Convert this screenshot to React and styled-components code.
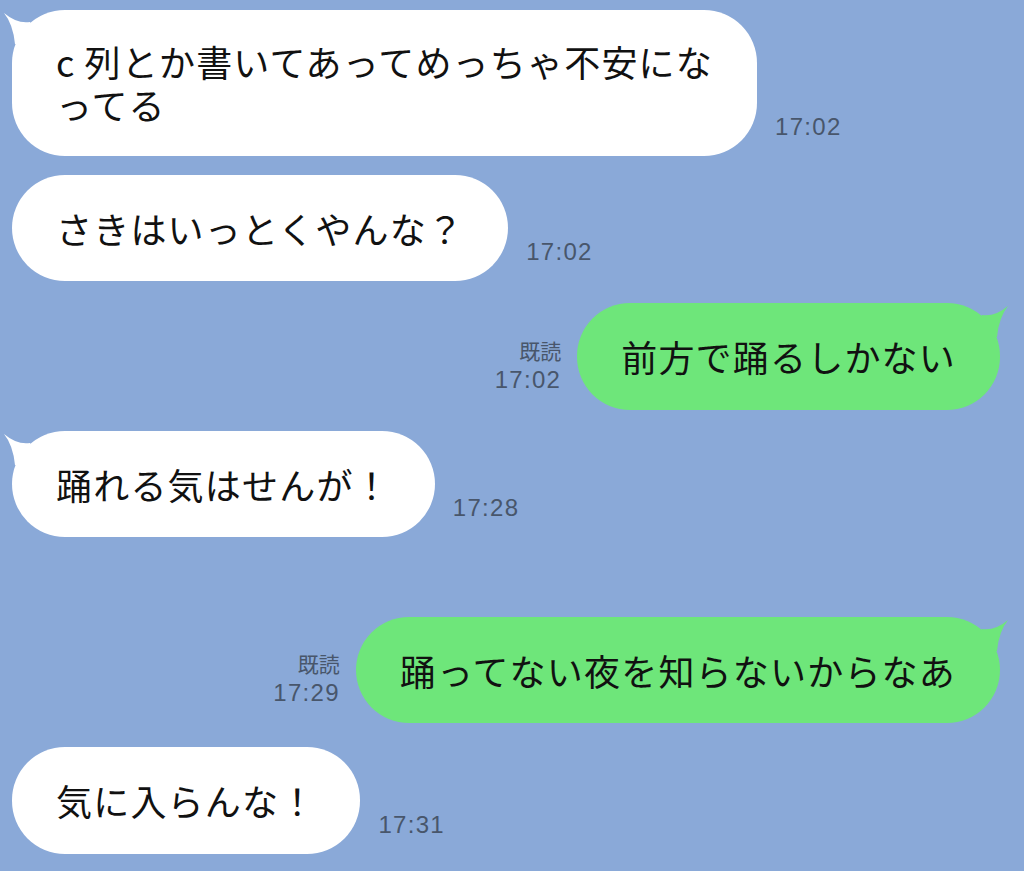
import React from "react";
import styled, { createGlobalStyle } from "styled-components";

const Global = createGlobalStyle`
  html, body { margin: 0; padding: 0; background: #8aa9d8; }
  body { font-family: "Noto Sans CJK JP", "Noto Sans", sans-serif; }
`;

const Screen = styled.div`
  width: 1024px;
  height: 871px;
  background: #8aa9d8;
  box-sizing: border-box;
  padding: 10px 24px 0 12px;
  overflow: hidden;
  display: flex;
  flex-direction: column;
`;

const Row = styled.div`
  display: flex;
  align-items: flex-end;
  justify-content: ${(p) => (p.$mine ? "flex-end" : "flex-start")};
  margin-top: ${(p) => p.$gap || 0}px;
`;

const Bubble = styled.div`
  position: relative;
  box-sizing: border-box;
  height: ${(p) => p.$h}px;
  padding: 0 44px;
  border-radius: 53px;
  background: ${(p) => (p.$mine ? "#6ee67a" : "#ffffff")};
  color: #111;
  font-family: "Noto Sans CJK JP", sans-serif;
  font-size: 36px;
  letter-spacing: 1.2px;
  white-space: nowrap;
  display: flex;
  flex-direction: column;
  justify-content: center;
`;

const Line = styled.span`
  display: block;
  line-height: 43px;
`;

const Latin = styled.span`
  margin-right: 9px;
`;

const Tail = styled.svg`
  position: absolute;
  top: 0;
  ${(p) => (p.$mine ? "right: -10px; transform: scaleX(-1);" : "left: -10px;")}
  width: 50px;
  height: 40px;
  overflow: visible;
`;

const Meta = styled.div`
  display: flex;
  flex-direction: column;
  align-items: ${(p) => (p.$mine ? "flex-end" : "flex-start")};
  margin: 0 ${(p) => (p.$mine ? "16px" : "0")} ${(p) => p.$mb || 18}px ${(p) => (p.$mine ? "0" : "18px")};
  color: #48566b;
`;

const Read = styled.span`
  font-family: "Noto Sans CJK JP", sans-serif;
  font-size: 21px;
  line-height: 22px;
  margin-bottom: 8px;
`;

const Time = styled.span`
  font-family: "Liberation Sans", "Inter", sans-serif;
  font-size: 24px;
  line-height: 22px;
  letter-spacing: 1.3px;
`;

function BubbleTail({ mine }) {
  return (
    <Tail $mine={mine} viewBox="-10 0 50 40">
      <path
        d="M -8 3 Q 5 14 18 12 L 34 34 L 3 34 Q 1 14 -8 3 Z"
        fill={mine ? "#6ee67a" : "#ffffff"}
      />
    </Tail>
  );
}

function Message({ mine, tail, gap, h, lines, time, read, mb }) {
  const bubble = (
    <Bubble $mine={mine} $h={h}>
      {tail && <BubbleTail mine={mine} />}
      {lines.map((l, i) => (
        <Line key={i}>{l}</Line>
      ))}
    </Bubble>
  );
  const meta = (
    <Meta $mine={mine} $mb={mb}>
      {read && <Read>既読</Read>}
      <Time>{time}</Time>
    </Meta>
  );
  return (
    <Row $mine={mine} $gap={gap}>
      {mine ? (
        <>
          {meta}
          {bubble}
        </>
      ) : (
        <>
          {bubble}
          {meta}
        </>
      )}
    </Row>
  );
}

export default function App() {
  return (
    <>
      <Global />
      <Screen>
        <Message
          tail
          h={146}
          time="17:02"
          lines={[
            <>
              <Latin>c</Latin>列とか書いてあってめっちゃ不安にな
            </>,
            "ってる",
          ]}
        />
        <Message gap={19} h={106} time="17:02" lines={["さきはいっとくやんな？"]} />
        <Message mine tail read gap={22} h={107} time="17:02" lines={["前方で踊るしかない"]} mb={19} />
        <Message tail gap={21} h={106} time="17:28" lines={["踊れる気はせんが！"]} />
        <Message mine tail read gap={80} h={106} time="17:29" lines={["踊ってない夜を知らないからなあ"]} mb={19} />
        <Message gap={24} h={107} time="17:31" lines={["気に入らんな！"]} />
      </Screen>
    </>
  );
}
